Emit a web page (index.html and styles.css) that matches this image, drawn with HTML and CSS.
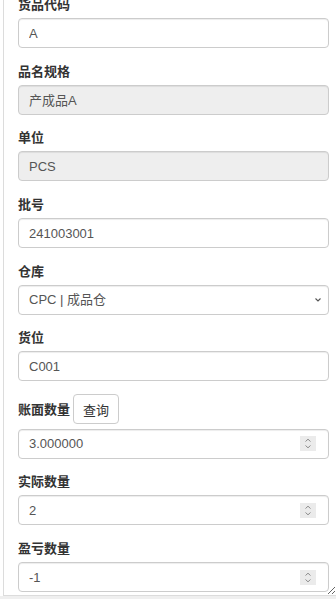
FILE: index.html
```html
<!DOCTYPE html>
<html lang="zh-CN">
<head>
<meta charset="utf-8">
<title>盘点</title>
<link rel="stylesheet" href="styles.css">
</head>
<body>
<div class="frame">
  <div class="panel" id="panel">
    <div class="group">
      <label class="lbl">货品代码</label>
      <input class="ctrl" type="text" value="A">
    </div>
    <div class="group">
      <label class="lbl">品名规格</label>
      <input class="ctrl ro" type="text" value="产成品A" readonly>
    </div>
    <div class="group">
      <label class="lbl">单位</label>
      <input class="ctrl ro" type="text" value="PCS" readonly>
    </div>
    <div class="group">
      <label class="lbl">批号</label>
      <input class="ctrl" type="text" value="241003001">
    </div>
    <div class="group">
      <label class="lbl">仓库</label>
      <div class="box">
        <select class="bare">
          <option>CPC | 成品仓</option>
        </select>
        <svg class="chev" width="6" height="4" viewBox="0 0 6 4"><path d="M0.5 0.5 L3 3 L5.5 0.5" fill="none" stroke="#555" stroke-width="1.1"/></svg>
      </div>
    </div>
    <div class="group">
      <label class="lbl">货位</label>
      <input class="ctrl" type="text" value="C001">
    </div>
    <div class="group">
      <div class="lbl lblrow"><span>账面数量</span><button class="btn" type="button">查询</button></div>
      <div class="box">
        <input class="bare" type="text" value="3.000000">
        <span class="spin"><svg width="16" height="15" viewBox="0 0 16 15"><path d="M5.5 5.5 L8 3.2 L10.5 5.5 M5.5 9.5 L8 11.8 L10.5 9.5" fill="none" stroke="#8c8c8c" stroke-width="1"/></svg></span>
      </div>
    </div>
    <div class="group">
      <label class="lbl">实际数量</label>
      <div class="box">
        <input class="bare" type="text" value="2">
        <span class="spin"><svg width="16" height="15" viewBox="0 0 16 15"><path d="M5.5 5.5 L8 3.2 L10.5 5.5 M5.5 9.5 L8 11.8 L10.5 9.5" fill="none" stroke="#8c8c8c" stroke-width="1"/></svg></span>
      </div>
    </div>
    <div class="group">
      <label class="lbl">盈亏数量</label>
      <div class="box">
        <input class="bare" type="text" value="-1">
        <span class="spin"><svg width="16" height="15" viewBox="0 0 16 15"><path d="M5.5 5.5 L8 3.2 L10.5 5.5 M5.5 9.5 L8 11.8 L10.5 9.5" fill="none" stroke="#8c8c8c" stroke-width="1"/></svg></span>
      </div>
    </div>
  </div>
</div>
<script src="script.js"></script>
</body>
</html>
```
FILE: styles.css
```css
html {
  background: #efefef;
}
body {
  margin: 0;
  font-family: "Liberation Sans", Arial, "Noto Sans CJK SC", sans-serif;
  font-size: 13px;
  color: #333;
}
.frame {
  background: #fff;
  padding-left: 3px;
}
.panel {
  box-sizing: border-box;
  height: 596px;
  border-left: 1px solid #dcdcdc;
  border-bottom: 1px solid #dcdcdc;
  padding: 15px 7px 30px 14px;
  overflow: auto;
  resize: both;
  scrollbar-width: none;
}
.panel::-webkit-scrollbar {
  display: none;
}
.group {
  margin-bottom: 14.7px;
}
.lbl {
  display: block;
  font-weight: bold;
  font-size: 13px;
  line-height: 17px;
  margin-bottom: 5px;
  color: #333;
}
.lblrow {
  display: flex;
  align-items: center;
  height: 29px;
  margin-top: -1.5px;
  margin-bottom: 5px;
}
.btn {
  margin-left: 3px;
  height: 30px;
  padding: 0 9px;
  border: 1px solid #ccc;
  border-radius: 4px;
  background: #fff;
  color: #333;
  font-family: "Liberation Sans", Arial, "Noto Sans CJK SC", sans-serif;
  font-size: 13px;
  font-weight: normal;
}
.ctrl,
.box {
  box-sizing: border-box;
  display: block;
  width: 100%;
  height: 30px;
  border: 1px solid #ccc;
  border-radius: 4px;
  background: #fff;
  box-shadow: inset 0 1px 1px rgba(0, 0, 0, 0.075);
}
.ctrl {
  padding: 0 10px;
  font-family: "Liberation Sans", Arial, "Noto Sans CJK SC", sans-serif;
  font-size: 13px;
  color: #555;
}
.ctrl.ro {
  background: #eee;
}
.box {
  display: flex;
  align-items: center;
}
.bare {
  flex: 1;
  min-width: 0;
  height: 100%;
  border: 0;
  outline: none;
  background: transparent;
  padding: 0 10px;
  margin: 0;
  font-family: "Liberation Sans", Arial, "Noto Sans CJK SC", sans-serif;
  font-size: 13px;
  color: #555;
  -webkit-appearance: none;
  appearance: none;
}
.chev {
  flex: none;
  margin-right: 7px;
}
.spin {
  flex: none;
  display: flex;
  width: 16px;
  height: 15px;
  margin-right: 12px;
  background: #ebebeb;
}
```
FILE: script.js
```js
document.getElementById('panel').scrollTop = 19;
```
